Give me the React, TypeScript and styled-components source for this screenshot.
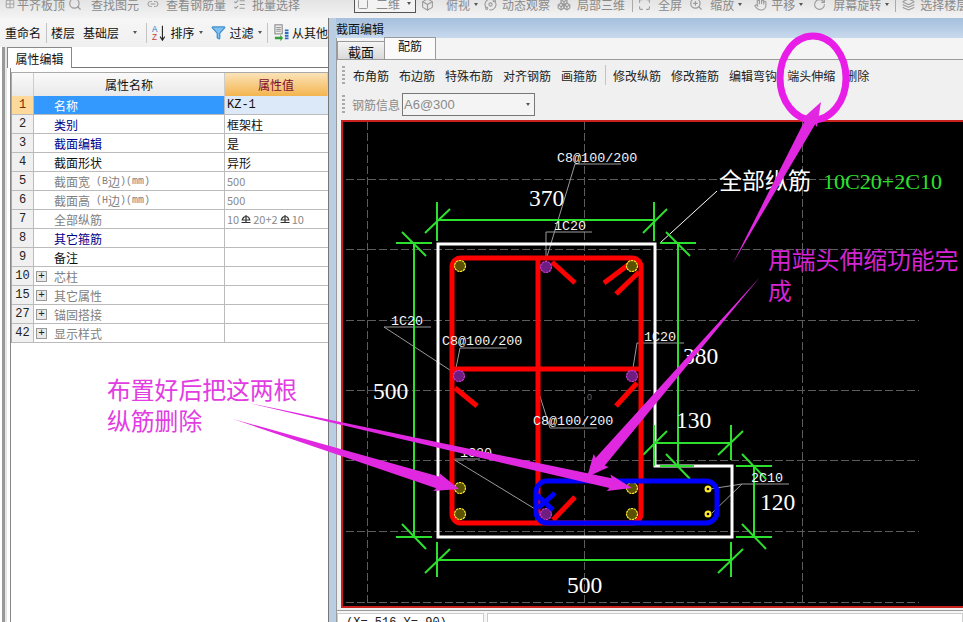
import React from "react";
import styled, { createGlobalStyle } from "styled-components";
import { Filter, Grid2x2, Search, Link2, ListChecks, Square, Box, Orbit, Boxes, ZoomIn, Maximize, Hand, RotateCw, Layers } from "lucide-react";

const UI_FONT = `"Noto Sans CJK SC", "Liberation Sans", sans-serif`;

const Global = createGlobalStyle`
  html, body { margin: 0; padding: 0; background: #fff; }
  body { font-family: ${UI_FONT}; font-size: 12px; color: #111; }
  * { box-sizing: border-box; }
`;

const Page = styled.div`
  position: relative;
  width: 963px;
  height: 622px;
  overflow: hidden;
  display: flex;
  flex-direction: column;
`;

const TopBar = styled.div`
  height: 18px;
  flex: none;
  display: flex;
  background: linear-gradient(#e4e4e4, #f3f3f3);
  overflow: hidden;
`;
const TopItem = styled.div<{ $left: number; $gap: number }>`
  flex: none;
  margin-left: ${(p) => p.$left}px;
  margin-top: -5px;
  height: 18px;
  display: flex;
  align-items: center;
  gap: ${(p) => p.$gap}px;
  color: #8a8a8a;
  font-size: 12px;
  white-space: nowrap;
  svg { color: #9a9a9a; flex: none; }
`;
const ViewBox = styled.div`
  flex: none;
  margin-left: 54px;
  margin-top: -6px;
  width: 62px;
  height: 19px;
  border: 1px solid #555;
  background: #f3f3f3;
  display: flex;
  align-items: center;
  padding-left: 2px;
  gap: 7px;
  color: #8a8a8a;
  white-space: nowrap;
  svg { color: #9a9a9a; flex: none; }
`;
const Caret = styled.span`
  flex: none;
  display: inline-block;
  width: 0;
  height: 0;
  border-left: 2.5px solid transparent;
  border-right: 2.5px solid transparent;
  border-top: 3px solid #555;
`;
const TopCaret = styled(Caret)`
  margin: 3px 0 0 4px;
`;
const TopSep = styled.div<{ $left: number }>`
  flex: none;
  width: 1px;
  height: 12px;
  margin-left: ${(p) => p.$left}px;
  background: #aaa;
`;

const Body = styled.div`
  flex: 1;
  display: flex;
  min-height: 0;
`;

const LeftPanel = styled.div`
  flex: none;
  width: 329px;
  display: flex;
  flex-direction: column;
  background: #fff;
  border-right: 1px solid #777;
`;
const LeftTools = styled.div`
  height: 29px;
  flex: none;
  display: flex;
  align-items: center;
  padding-left: 5px;
  background: linear-gradient(#f6f6f6, #f0f0f0);
  white-space: nowrap;
  overflow: hidden;
  color: #111;
`;
const ToolSep = styled.span<{ $ml: number; $mr: number }>`
  flex: none;
  width: 1px;
  height: 20px;
  margin: 0 ${(p) => p.$mr}px 0 ${(p) => p.$ml}px;
  background: #c4c4c4;
`;
const ToolText = styled.span<{ $left?: number }>`
  flex: none;
  margin-left: ${(p) => p.$left ?? 0}px;
`;
const ToolCaret = styled(Caret)<{ $left: number }>`
  margin-left: ${(p) => p.$left}px;
`;
const FilterIcon = styled(Filter)`
  flex: none;
  margin-left: 8px;
`;
const LeftBody = styled.div`
  flex: 1;
  display: flex;
  min-height: 0;
`;
const LeftEdge = styled.div`
  flex: none;
  width: 11px;
  background: linear-gradient(90deg, #fff 0 2px, #999 2px 5px, #e6e6e6 5px 7px, #fff 7px 10px, #888 10px 11px);
`;
const PropArea = styled.div`
  flex: 1;
  display: flex;
  flex-direction: column;
  min-width: 0;
`;
const TabLine = styled.div`
  height: 21px;
  flex: none;
  margin-left: -4px;
  border-bottom: 1px solid #777;
  display: flex;
`;
const PropTab = styled.div`
  width: 65px;
  height: 21px;
  background: #fff;
  border: 1px solid #888;
  border-bottom: none;
  display: flex;
  align-items: center;
  justify-content: center;
  font-size: 12px;
`;
const Table = styled.div`
  margin-top: 4px;
  border-top: 1px solid #aaa;
  display: grid;
  grid-template-columns: 22px 191px 1fr;
  grid-template-rows: 23px;
  grid-auto-rows: 19px;
  border-left: 1px solid #aaa;
`;
const HeadCell = styled.div<{ $kind?: "num" | "name" | "value" }>`
  display: flex;
  align-items: center;
  justify-content: center;
  font-size: 12px;
  color: ${(p) => (p.$kind === "value" ? "#7a0a30" : "#111")};
  background: ${(p) =>
    p.$kind === "value"
      ? "linear-gradient(#fbe3b8, #f3b44f)"
      : "linear-gradient(#fafafa, #e9e9e9)"};
  border-right: 1px solid #ccc;
`;
const NumCell = styled.div<{ $active?: boolean }>`
  display: flex;
  align-items: center;
  justify-content: center;
  font-family: "Liberation Mono", monospace;
  font-size: 12px;
  color: ${(p) => (p.$active ? "#7a2a00" : "#222")};
  background: ${(p) => (p.$active ? "#fdd99b" : "#f0f0f0")};
  border-bottom: 1px solid #bbb;
  border-right: 1px solid #bbb;
`;
const NameCell = styled.div<{ $tone: string; $active?: boolean }>`
  display: flex;
  align-items: center;
  padding-left: 20px;
  color: ${(p) => (p.$active ? "#fff" : p.$tone)};
  background: ${(p) => (p.$active ? "#3399ff" : "#fff")};
  border-bottom: 1px solid #bbb;
  border-right: 1px solid #bbb;
  font-size: 12px;
  white-space: pre;
`;
const GroupName = styled(NameCell)`
  padding-left: 2px;
  gap: 7px;
`;
const Tiny = styled.span`
  font: 10px "Liberation Mono", monospace;
`;
const Plus = styled.span`
  flex: none;
  width: 11px;
  height: 11px;
  border: 1px solid #999;
  background: #e8e8e8;
  color: #222;
  display: flex;
  align-items: center;
  justify-content: center;
  font: 11px/1 "Liberation Mono", monospace;
`;
const ValueCell = styled.div<{ $active?: boolean; $grey?: boolean; $mono?: boolean }>`
  display: flex;
  align-items: center;
  padding-left: 2px;
  font-size: ${(p) => (p.$grey ? "11px" : "12px")};
  font-family: ${(p) => (p.$mono ? `"Liberation Mono", monospace` : "inherit")};
  color: ${(p) => (p.$grey ? "#8a8a8a" : "#111")};
  background: ${(p) => (p.$active ? "#dce9f8" : "#fff")};
  border-bottom: 1px solid #bbb;
  white-space: nowrap;
`;

const Splitter = styled.div`
  flex: none;
  width: 8px;
  background: #b9cde3;
  border-right: 1px solid #9a9a9a;
`;

const RightPanel = styled.div`
  flex: 1;
  min-width: 0;
  display: flex;
  flex-direction: column;
  background: #f0f0f0;
`;
const WinTitle = styled.div`
  height: 20px;
  flex: none;
  display: flex;
  align-items: center;
  background: linear-gradient(#a4bfdd, #c8d9ec);
  font-size: 12px;
  margin-left: -1px;
`;
const TabRow = styled.div`
  height: 22px;
  flex: none;
  display: flex;
  align-items: flex-end;
  background: #f4f4f4;
  border-bottom: 1px solid #9a9a9a;
`;
const EditTab = styled.div<{ $on?: boolean }>`
  height: ${(p) => (p.$on ? 22 : 18)}px;
  width: ${(p) => (p.$on ? 52 : 47)}px;
  padding: ${(p) => (p.$on ? "0 0 6px" : "2px 0 0")};
  display: flex;
  align-items: center;
  justify-content: center;
  font-size: ${(p) => (p.$on ? 12 : 13)}px;
  background: ${(p) => (p.$on ? "#fafafa" : "linear-gradient(#f4f4f4, #d9d9d9)")};
  border: 1px solid #9a9a9a;
  border-bottom: none;
  ${(p) => (p.$on ? "" : "border-right: none;")}
`;
const EditTools = styled.div<{ $h: number }>`
  height: ${(p) => p.$h}px;
  flex: none;
  display: flex;
  align-items: center;
  padding-left: 5px;
  white-space: nowrap;
  color: #222;
  overflow: hidden;
`;
const Grip = styled.span`
  flex: none;
  width: 3px;
  height: 18px;
  margin-right: 8px;
  background: repeating-linear-gradient(#aaa 0 2px, transparent 2px 4px);
`;
const EditBtn = styled.span`
  flex: none;
  margin-right: 10px;
`;
const FieldLabel = styled.span`
  flex: none;
  color: #8a8a8a;
  margin: 0 2px 0 -1px;
`;
const FieldBox = styled.div`
  flex: none;
  width: 133px;
  height: 23px;
  border: 1px solid #777;
  background: #f4f4f4;
  display: flex;
  align-items: center;
  justify-content: space-between;
  padding: 0 4px 0 1px;
  color: #8a8a8a;
  font: 13px "Liberation Sans", sans-serif;
`;
const CanvasFrame = styled.div`
  flex: 1;
  min-height: 0;
  margin: 2px 0 0 4px;
  border: 2px solid #c8201c;
  border-right: none;
  background: #000;
  overflow: hidden;
`;
const CadSvg = styled.svg`
  display: block;
  width: 100%;
  height: 100%;
`;
const Status = styled.div`
  height: 12px;
  flex: none;
  margin-top: 2px;
  border-top: 1px solid #999;
  background: #f6f6f6;
  padding-top: 2px;
  display: flex;
  gap: 3px;
  overflow: hidden;
`;
const StatusCell = styled.div<{ $w?: number }>`
  ${(p) => (p.$w ? `width: ${p.$w}px; flex: none;` : "flex: 1;")}
  height: 14px;
  background: #fff;
  border: 1px solid #ccc;
  padding: 2px 0 0 8px;
  font: 12px/15px "Liberation Mono", monospace;
  color: #222;
  overflow: hidden;
  white-space: nowrap;
`;

const Overlay = styled.svg`
  position: absolute;
  left: 0;
  top: 0;
  width: 963px;
  height: 622px;
  pointer-events: none;
`;
const Callout = styled.div<{ $x: number; $y: number; $w: number; $color: string }>`
  position: absolute;
  left: ${(p) => p.$x}px;
  top: ${(p) => p.$y}px;
  width: ${(p) => p.$w}px;
  color: ${(p) => p.$color};
  font-size: 23.8px;
  line-height: 31px;
  pointer-events: none;
`;
const RebarSvg = styled.svg`
  margin: 0 2px;
  flex: none;
`;

/* ---------- drawings ---------- */

const RebarMark = () => (
  <RebarSvg width="10" height="10" viewBox="0 0 10 10">
    <path d="M1.5 6a3.5 3.5 0 0 1 7 0M5 1v7.5M0.5 6h9M0.5 8.5h9" fill="none" stroke="#333" strokeWidth="1.2" />
  </RebarSvg>
);

const SortIcon = () => (
  <svg width="16" height="20" viewBox="0 0 16 20">
    <text x="0" y="9" fontSize="9" fontFamily="Liberation Sans" fill="#2a6fc0">A</text>
    <text x="0" y="18" fontSize="9" fontFamily="Liberation Sans" fill="#c43a3a">Z</text>
    <path d="M11.5 2v15M9 14l2.5 4 2.5-4" fill="none" stroke="#222" strokeWidth="1.2" />
  </svg>
);

const ImportIcon = () => (
  <svg width="17" height="20" viewBox="0 0 17 20">
    <rect x="1" y="1" width="8" height="10" fill="#eee" stroke="#777" />
    <path d="M2.5 4h5M2.5 6h5M2.5 8h5" stroke="#888" />
    <path d="M1 14h6v-2l3 3.5L7 19v-2H1z" fill="#3a9c3a" />
    <path d="M12 7h4M12 10h4M12 13h4M12 16h4" stroke="#2a6fc0" strokeWidth="2" />
  </svg>
);

type Seg = [number, number, number, number];

const GREEN_LINES: Seg[] = [
  [437, 220, 654, 220], [437, 202, 437, 241], [425, 233, 450, 209], [654, 202, 654, 241], [643, 233, 667, 209],
  [414, 243, 414, 537], [396, 243, 432, 243], [402, 232, 426, 256], [396, 537, 432, 537], [402, 524, 426, 549],
  [437, 560, 731, 560], [437, 542, 437, 577], [425, 573, 450, 549], [731, 542, 731, 577], [718, 573, 743, 549],
  [678, 243, 678, 466], [660, 243, 696, 243], [666, 232, 690, 256], [660, 466, 694, 466], [666, 454, 690, 479],
  [654, 443, 731, 443], [654, 425, 654, 466], [643, 455, 667, 431], [731, 425, 731, 460], [718, 455, 743, 431],
  [754, 466, 754, 537], [736, 466, 772, 466], [736, 537, 772, 537], [742, 454, 766, 479], [742, 524, 766, 549],
];
const RED_LINES: Seg[] = [
  [538, 258, 538, 523], [452, 369, 641, 369],
  [552, 262, 575, 283], [632, 262, 604, 283], [639, 272, 616, 294],
  [455, 388, 477, 406], [637, 383, 616, 406], [553, 520, 575, 497],
];
const LEADERS: Seg[] = [
  [575, 164, 621, 164], [575, 164, 546, 260],
  [546, 232, 592, 232], [546, 232, 546, 265],
  [384, 327, 431, 327], [384, 327, 456, 374],
  [460, 348, 507, 348], [460, 348, 455, 373],
  [637, 343, 684, 343], [637, 343, 632, 374],
  [550, 428, 597, 428], [550, 428, 538, 390],
  [453, 459, 480, 459], [453, 459, 540, 512],
  [742, 484, 789, 484], [742, 484, 710, 489], [742, 484, 712, 513],
];
const YELLOW = { stroke: "#ffe92e", fill: "#5a5200" };
const PURPLE = { stroke: "#c838d0", fill: "#6e1e80" };
const BARS = [
  { x: 460, y: 266, c: YELLOW }, { x: 546, y: 267, c: PURPLE }, { x: 632, y: 266, c: YELLOW },
  { x: 459, y: 376, c: PURPLE }, { x: 632, y: 376, c: PURPLE },
  { x: 460, y: 488, c: YELLOW }, { x: 632, y: 488, c: YELLOW },
  { x: 460, y: 514, c: YELLOW }, { x: 546, y: 514, c: PURPLE }, { x: 632, y: 514, c: YELLOW },
];
const LABELS: { x: number; y: number; t: string }[] = [
  { x: 557, y: 162, t: "C8@100/200" }, { x: 554, y: 230, t: "1C20" }, { x: 391, y: 325, t: "1C20" },
  { x: 442, y: 345, t: "C8@100/200" }, { x: 644, y: 341, t: "1C20" }, { x: 533, y: 425, t: "C8@100/200" },
  { x: 460, y: 457, t: "1C20" }, { x: 751, y: 482, t: "2C10" },
];
const DIMS: { x: number; y: number; t: string }[] = [
  { x: 529, y: 206, t: "370" }, { x: 373, y: 399, t: "500" }, { x: 683, y: 364, t: "380" },
  { x: 676, y: 428, t: "130" }, { x: 760, y: 510, t: "120" }, { x: 567, y: 593, t: "500" },
];
const GRID_Y = [179, 249, 320, 390, 460, 531, 602];
const GRID_X = [367, 584, 802];

const Line = ({ s, ...rest }: { s: Seg } & React.SVGProps<SVGLineElement>) => (
  <line x1={s[0]} y1={s[1]} x2={s[2]} y2={s[3]} {...rest} />
);

const CadDrawing = () => (
  <CadSvg viewBox="343 122 620 484" preserveAspectRatio="xMinYMin slice">
    <g stroke="#5c5c5c" strokeWidth="1" strokeDasharray="8 3">
      {GRID_Y.map((y) => (
        <line key={y} x1={346} y1={y + 0.5} x2={919} y2={y + 0.5} />
      ))}
      {GRID_X.map((x) => (
        <line key={x} x1={x + 0.5} y1={122} x2={x + 0.5} y2={604} />
      ))}
    </g>
    <g stroke="#9a9a9a" strokeWidth="1">
      {LEADERS.map((s, i) => (
        <Line key={i} s={s} />
      ))}
    </g>
    <path d="M660 243 L717 191" stroke="#fff" strokeWidth="1" />
    <path d="M438 244H655V466H732V537H438Z" fill="none" stroke="#fff" strokeWidth="3" />
    <g stroke="#2ee02e" strokeWidth="2">
      {GREEN_LINES.map((s, i) => (
        <Line key={i} s={s} />
      ))}
    </g>
    <g stroke="#ff0000" strokeWidth="5" fill="none">
      <rect x="452" y="258" width="189" height="265" rx="9" />
      {RED_LINES.map((s, i) => (
        <Line key={i} s={s} />
      ))}
    </g>
    {BARS.map((b, i) => (
      <circle key={i} cx={b.x} cy={b.y} r="5.5" fill={b.c.fill} stroke={b.c.stroke} strokeWidth="1.2" strokeDasharray="2.4 0.6" />
    ))}
    <g stroke="#0000ff" strokeWidth="5" fill="none">
      <rect x="536" y="481" width="181" height="42" rx="11" />
      <path d="M555 493L538 508M537 495L553 510" />
    </g>
    <g fill="#ffe92e">
      <circle cx="708" cy="489" r="3.5" />
      <circle cx="708" cy="514" r="3.5" />
    </g>
    <g fill="#000">
      <circle cx="708" cy="489" r="1.3" />
      <circle cx="708" cy="514" r="1.3" />
    </g>
    <g fill="#f4f4f4" fontFamily="'Liberation Mono', monospace" fontSize="13.4">
      {LABELS.map((l, i) => (
        <text key={i} x={l.x} y={l.y}>{l.t}</text>
      ))}
    </g>
    <g fill="#fff" fontFamily="'Liberation Serif', serif" fontSize="23.5">
      {DIMS.map((d, i) => (
        <text key={i} x={d.x} y={d.y}>{d.t}</text>
      ))}
    </g>
    <text x="587" y="400" fill="#666" fontFamily="'Liberation Sans', sans-serif" fontSize="9">0</text>
    <text x="719" y="189" fill="#fff" fontFamily={UI_FONT} fontSize="23">全部纵筋</text>
    <text x="823" y="189" fill="#2ee02e" fontFamily="'Liberation Serif', serif" fontSize="21" textLength="119" lengthAdjust="spacingAndGlyphs">10C20+2C10</text>
  </CadSvg>
);

const arrowPoints = (x1: number, y1: number, x2: number, y2: number, w: number, hl: number, hw: number) => {
  const d = Math.hypot(x2 - x1, y2 - y1);
  const ux = (x2 - x1) / d;
  const uy = (y2 - y1) / d;
  const nx = -uy;
  const ny = ux;
  const bx = x2 - ux * hl;
  const by = y2 - uy * hl;
  const wx = x2 - ux * (hl + 2);
  const wy = y2 - uy * (hl + 2);
  const pts = [
    [x1, y1],
    [bx + (nx * w) / 2, by + (ny * w) / 2],
    [wx + (nx * hw) / 2, wy + (ny * hw) / 2],
    [x2, y2],
    [wx - (nx * hw) / 2, wy - (ny * hw) / 2],
    [bx - (nx * w) / 2, by - (ny * w) / 2],
  ];
  return pts.map((p) => p.join(",")).join(" ");
};

const Annotations = () => (
  <Overlay viewBox="0 0 963 622">
    <ellipse cx="813" cy="78" rx="33" ry="42" fill="none" stroke="#e81ee8" strokeWidth="7" />
    <g fill="#e128e1">
      <polygon points={arrowPoints(733, 263, 821, 102, 11, 22, 17)} />
      <polygon points={arrowPoints(760, 277, 587, 477, 12, 20, 20)} />
      <polygon points={arrowPoints(249, 403, 632, 488, 10, 22, 17)} />
      <polygon points={arrowPoints(233, 419, 459, 489, 12, 22, 19)} />
    </g>
  </Overlay>
);

/* ---------- data ---------- */

const BLUE = "#00008b";
const BLACK = "#111";
const GREY = "#808080";

const ROWS: { n: string; name: React.ReactNode; tone: string; value?: string; mono?: boolean; active?: boolean; grey?: boolean; rebar?: boolean }[] = [
  { n: "1", name: "名称", tone: BLACK, value: "KZ-1", mono: true, active: true },
  { n: "2", name: "类别", tone: BLUE, value: "框架柱" },
  { n: "3", name: "截面编辑", tone: BLUE, value: "是" },
  { n: "4", name: "截面形状", tone: BLACK, value: "异形" },
  { n: "5", name: <>截面宽<Tiny> (B</Tiny>边<Tiny>)(mm)</Tiny></>, tone: GREY, value: "500", grey: true },
  { n: "6", name: <>截面高<Tiny> (H</Tiny>边<Tiny>)(mm)</Tiny></>, tone: GREY, value: "500", grey: true },
  { n: "7", name: "全部纵筋", tone: GREY, rebar: true, grey: true },
  { n: "8", name: "其它箍筋", tone: BLUE },
  { n: "9", name: "备注", tone: BLACK },
];
const GROUPS = [
  { n: "10", name: "芯柱" },
  { n: "15", name: "其它属性" },
  { n: "27", name: "锚固搭接" },
  { n: "42", name: "显示样式" },
];
const TOOLS_A = ["布角筋", "布边筋", "特殊布筋", "对齐钢筋", "画箍筋"];
const TOOLS_B = ["修改纵筋", "修改箍筋", "编辑弯钩", "端头伸缩", "删除"];

export default function App() {
  return (
    <Page>
      <Global />
      <TopBar>
        <TopItem $left={5} $gap={2}><Grid2x2 size={10} />平齐板顶</TopItem>
        <TopItem $left={3} $gap={9}><Search size={14} />查找图元</TopItem>
        <TopItem $left={8} $gap={7}><Link2 size={12} />查看钢筋量</TopItem>
        <TopItem $left={7} $gap={6}><ListChecks size={13} />批量选择</TopItem>
        <ViewBox><Square size={12} />二维<Caret /></ViewBox>
        <TopItem $left={5} $gap={12}><Box size={13} />俯视</TopItem>
        <TopCaret />
        <TopItem $left={6} $gap={5}><Orbit size={13} />动态观察</TopItem>
        <TopItem $left={7} $gap={6}><Boxes size={14} />局部三维</TopItem>
        <TopSep $left={7} />
        <TopItem $left={5} $gap={7}><Maximize size={13} />全屏</TopItem>
        <TopItem $left={7} $gap={7}><ZoomIn size={14} />缩放</TopItem>
        <TopCaret />
        <TopItem $left={12} $gap={4}><Hand size={13} />平移</TopItem>
        <TopCaret />
        <TopItem $left={10} $gap={7}><RotateCw size={13} />屏幕旋转</TopItem>
        <TopCaret />
        <TopSep $left={6} />
        <TopItem $left={6} $gap={5}><Layers size={13} />选择楼层</TopItem>
      </TopBar>
      <Body>
        <LeftPanel>
          <LeftTools>
            <ToolText>重命名</ToolText>
            <ToolSep $ml={5} $mr={4} />
            <ToolText>楼层</ToolText>
            <ToolText $left={8}>基础层</ToolText>
            <ToolCaret $left={14} />
            <ToolSep $ml={9} $mr={5} />
            <SortIcon />
            <ToolText $left={4}>排序</ToolText>
            <ToolCaret $left={4} />
            <FilterIcon size={15} color="#3f8ed0" fill="#7fc0ee" />
            <ToolText $left={4}>过滤</ToolText>
            <ToolCaret $left={4} />
            <ToolSep $ml={5} $mr={6} />
            <ImportIcon />
            <ToolText $left={3}>从其他</ToolText>
          </LeftTools>
          <LeftBody>
            <LeftEdge />
            <PropArea>
              <TabLine>
                <PropTab>属性编辑</PropTab>
              </TabLine>
              <Table>
                <HeadCell $kind="num" />
                <HeadCell $kind="name">属性名称</HeadCell>
                <HeadCell $kind="value">属性值</HeadCell>
                {ROWS.map((r) => (
                  <React.Fragment key={r.n}>
                    <NumCell $active={r.active}>{r.n}</NumCell>
                    <NameCell $tone={r.tone} $active={r.active}>{r.name}</NameCell>
                    <ValueCell $active={r.active} $grey={r.grey} $mono={r.mono}>
                      {r.rebar ? (
                        <>10<RebarMark />20+2<RebarMark />10</>
                      ) : (
                        r.value
                      )}
                    </ValueCell>
                  </React.Fragment>
                ))}
                {GROUPS.map((g) => (
                  <React.Fragment key={g.n}>
                    <NumCell>{g.n}</NumCell>
                    <GroupName $tone={GREY}><Plus>+</Plus>{g.name}</GroupName>
                    <ValueCell />
                  </React.Fragment>
                ))}
              </Table>
            </PropArea>
          </LeftBody>
        </LeftPanel>
        <Splitter />
        <RightPanel>
          <WinTitle>截面编辑</WinTitle>
          <TabRow>
            <EditTab>截面</EditTab>
            <EditTab $on>配筋</EditTab>
          </TabRow>
          <EditTools $h={30}>
            <Grip />
            {TOOLS_A.map((t) => (
              <EditBtn key={t}>{t}</EditBtn>
            ))}
            <ToolSep $ml={-2} $mr={7} />
            {TOOLS_B.map((t) => (
              <EditBtn key={t}>{t}</EditBtn>
            ))}
          </EditTools>
          <EditTools $h={28}>
            <Grip />
            <FieldLabel>钢筋信息</FieldLabel>
            <FieldBox>
              A6@300
              <Caret />
            </FieldBox>
          </EditTools>
          <CanvasFrame>
            <CadDrawing />
          </CanvasFrame>
          <Status>
            <StatusCell $w={147}>(X= 516 Y= 90)</StatusCell>
            <StatusCell />
          </Status>
        </RightPanel>
      </Body>
      <Annotations />
      <Callout $x={107} $y={373} $w={200} $color="#e23ce2">布置好后把这两根纵筋删除</Callout>
      <Callout $x={768} $y={243} $w={195} $color="#d424d4">用端头伸缩功能完成</Callout>
    </Page>
  );
}
